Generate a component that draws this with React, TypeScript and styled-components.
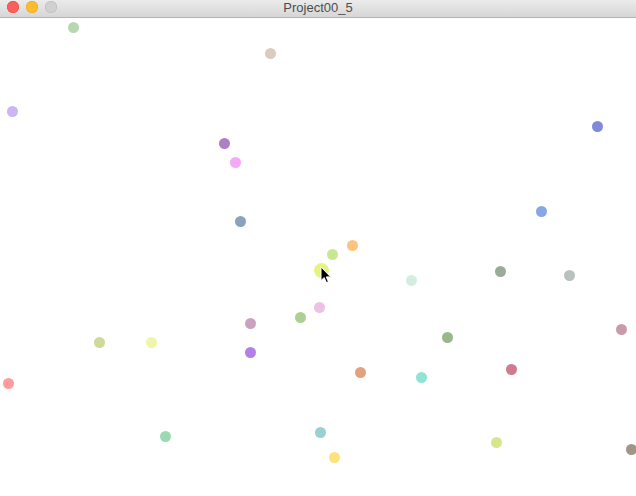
import React from "react";
import styled, { createGlobalStyle } from "styled-components";

const Global = createGlobalStyle`
  html, body { margin: 0; padding: 0; background: #ffffff; }
  body { font-family: "Liberation Sans", Arial, sans-serif; overflow: hidden; }
`;

const Window = styled.div`
  width: 636px;
  height: 496px;
  display: flex;
  flex-direction: column;
  background: #ffffff;
  overflow: hidden;
`;

const TitleBar = styled.div`
  height: 16px;
  flex: 0 0 16px;
  display: flex;
  align-items: flex-start;
  position: relative;
  background: linear-gradient(#ebebeb, #d6d6d6);
  border-bottom: 1px solid #b4b4b4;
  padding: 1px 0 0 7px;
  box-sizing: content-box;
`;

const Lights = styled.div`
  display: flex;
  gap: 7px;
`;

const Light = styled.span<{ $bg: string; $border: string }>`
  width: 12px;
  height: 12px;
  border-radius: 50%;
  background: ${(p) => p.$bg};
  box-shadow: inset 0 0 0 0.5px ${(p) => p.$border};
  display: block;
`;

const Title = styled.div`
  position: absolute;
  left: 0;
  right: 0;
  top: 0;
  text-align: center;
  font-size: 13px;
  line-height: 15px;
  color: #4d4d4d;
`;

const Canvas = styled.div`
  position: relative;
  flex: 1;
  background: #ffffff;
`;

const Dot = styled.span<{ $size: number; $color: string }>`
  position: absolute;
  width: ${(p) => p.$size}px;
  height: ${(p) => p.$size}px;
  margin-left: ${(p) => -p.$size / 2}px;
  margin-top: ${(p) => -p.$size / 2}px;
  border-radius: 50%;
  background: ${(p) => p.$color};
`;

const Cursor = styled.svg`
  position: absolute;
  left: 320px;
  top: 248px;
`;

const TOP = 18;

const dots: [number, number, string, number?][] = [
  [73, 27, "#b5d8b1"],
  [270, 53, "#d9cbbe"],
  [12, 111, "#cdb4f2"],
  [224, 143, "#b07fc1"],
  [235, 162, "#f4a8f6"],
  [597, 126, "#8189da"],
  [240, 221, "#88a3bb"],
  [541, 211, "#86a6e4"],
  [352, 245, "#fdc47f"],
  [332, 254, "#c8e88f"],
  [321, 270, "#e6f47e", 15],
  [411, 280, "#d3eee1"],
  [500, 271, "#9bab99"],
  [569, 275, "#b9c1bd"],
  [319, 307, "#edc1e2"],
  [300, 317, "#aad192"],
  [250, 323, "#c9a1c1"],
  [621, 329, "#c99ba9"],
  [447, 337, "#99b889"],
  [99, 342, "#d0d99a"],
  [151, 342, "#eef6aa"],
  [250, 352, "#b57fe7"],
  [8, 383, "#fd9b9d"],
  [360, 372, "#e4a17d"],
  [421, 377, "#8de5d5"],
  [511, 369, "#d07a92"],
  [165, 436, "#9bd9b3"],
  [320, 432, "#99d1d1"],
  [496, 442, "#d7e58c"],
  [334, 457, "#fde37c"],
  [631, 449, "#9f9589"],
];

export default function App() {
  return (
    <>
      <Global />
      <Window>
        <TitleBar>
          <Lights>
            <Light $bg="#fc5f57" $border="#de4a42" />
            <Light $bg="#fdbc2e" $border="#dea123" />
            <Light $bg="#d0d0d0" $border="#b5b5b5" />
          </Lights>
          <Title>Project00_5</Title>
        </TitleBar>
        <Canvas>
          {dots.map(([x, y, c, s], i) => (
            <Dot
              key={i}
              $size={s ?? 11}
              $color={c}
              style={{ left: x, top: y - TOP }}
            />
          ))}
          <Cursor width="12" height="18" viewBox="0 0 12 18">
            <path
              d="M1 1 L1 14.5 L4.2 11.6 L6.4 16.6 L8.4 15.8 L6.3 10.9 L10.6 10.9 Z"
              fill="#000"
              stroke="#fff"
              strokeWidth="1"
              strokeLinejoin="round"
            />
          </Cursor>
        </Canvas>
      </Window>
    </>
  );
}
